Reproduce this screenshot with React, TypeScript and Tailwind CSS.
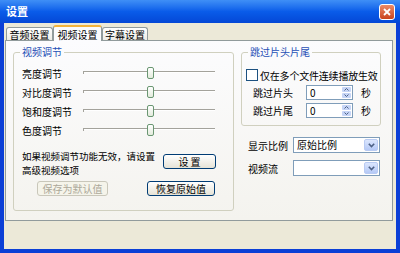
import React from "react";

const sliders = ["亮度调节", "对比度调节", "饱和度调节", "色度调节"];

function Slider() {
  return (
    <div className="relative h-[19px] w-[132px]">
      {/* track */}
      <div className="absolute left-0 right-0 top-[7px] h-[2px] border-t border-t-[#a3a29b] border-b border-b-white" />
      <div className="absolute left-0 top-[7px] h-[3px] w-px bg-[#a3a29b]" />
      {/* thumb */}
      <div className="absolute left-[64px] top-[3px] h-[12px] w-[7px] rounded-[2px] border border-[#6a9672] bg-gradient-to-b from-white to-[#e3ebdc]" />
    </div>
  );
}

function XpButton({ label, width, disabled }: { label: string; width: string; disabled?: boolean }) {
  return (
    <div
      className={
        disabled
          ? `${width} flex h-[15px] items-center justify-center rounded-[3px] border border-[#c9c7ba] bg-[#f5f4ea] text-[#aca899]`
          : `${width} flex h-[15px] items-center justify-center rounded-[3px] border border-[#003c74] bg-gradient-to-b from-white to-[#e6e3d6] text-black`
      }
    >
      {label}
    </div>
  );
}

function Spin() {
  return (
    <div className="flex h-[15px] w-[47px] items-stretch border border-[#7f9db9] bg-white">
      <span className="flex flex-1 items-center pl-[3px] leading-none">0</span>
      <div className="flex w-[11px] flex-col gap-px p-px">
        {[0, 1].map((i) => (
          <div key={i} className="flex flex-1 items-center justify-center rounded-[1px] bg-[#c6d5f7]">
            <svg width="5" height="3" viewBox="0 0 5 3">
              <path d={i === 0 ? "M0.5 2.5 L2.5 0.5 L4.5 2.5" : "M0.5 0.5 L2.5 2.5 L4.5 0.5"} fill="none" stroke="#4d6185" strokeWidth="1" />
            </svg>
          </div>
        ))}
      </div>
    </div>
  );
}

function Select({ value }: { value: string }) {
  return (
    <div className="flex h-[16px] w-[87px] border border-[#7f9db9] bg-white">
      <span className="flex flex-1 items-center pl-[3px] leading-none">{value}</span>
      <div className="m-px flex w-[14px] items-center justify-center rounded-[2px] border border-[#b9cbf3] bg-gradient-to-b from-[#dbe6fd] to-[#b5c9f6]">
        <svg width="7" height="5" viewBox="0 0 7 5">
          <path d="M0.8 0.8 L3.5 3.6 L6.2 0.8" fill="none" stroke="#4d6185" strokeWidth="1.6" />
        </svg>
      </div>
    </div>
  );
}

export default function App() {
  return (
    <div className="flex h-[253px] w-[400px] flex-col bg-[#0b3fd6] font-['Noto_Sans_CJK_SC','Noto_Sans',sans-serif] text-[10px] text-black">
      {/* Title bar */}
      <div className="flex h-[23px] items-center justify-between bg-gradient-to-b from-[#3f8ff6] via-[#0a5ce9] to-[#0547d6] pl-[6px] pr-[5px]">
        <span className="text-[11px] font-bold text-white">设置</span>
        <div className="flex h-[16px] w-[16px] items-center justify-center rounded-[3px] border border-white bg-gradient-to-b from-[#eb8a66] to-[#c9421a]">
          <svg width="8" height="8" viewBox="0 0 8 8">
            <path d="M1 1 L7 7 M7 1 L1 7" stroke="white" strokeWidth="1.8" />
          </svg>
        </div>
      </div>

      {/* Body */}
      <div className="mx-[4px] mb-[4px] flex flex-1 flex-col bg-[#ece9d8]">
        {/* Tabs */}
        <div className="mt-[2px] flex h-[15px] items-end pl-[2px]">
          <div className="flex h-[13px] w-[47px] items-center justify-center rounded-t-[3px] border-x border-t border-[#919b9c] bg-gradient-to-b from-white to-[#ecebe5]">
            音频设置
          </div>
          <div className="relative z-10 -mb-px flex h-[16px] w-[49px] items-center justify-center rounded-t-[3px] border-x border-t-2 border-x-[#919b9c] border-t-[#f5b43c] bg-[#fcfcfe]">
            视频设置
          </div>
          <div className="flex h-[13px] w-[46px] items-center justify-center rounded-t-[3px] border-x border-t border-[#919b9c] bg-gradient-to-b from-white to-[#ecebe5]">
            字幕设置
          </div>
        </div>

        {/* Tab panel */}
        <div className="ml-px flex h-[181px] w-[388px] items-start border border-[#919b9c] bg-gradient-to-b from-[#fcfcfe] to-[#f4f3ee] pl-[7px] pt-[5px]">
          {/* 视频调节 */}
          <fieldset className="h-[165px] w-[221px] rounded-[3px] border border-[#d0d0bf] pl-[8px]">
            <legend className="ml-[-2px] px-[2px] leading-[12px] text-[#1f4fb5]">视频调节</legend>
            <div className="mt-[6px] flex flex-col">
              {sliders.map((s) => (
                <div key={s} className="flex h-[19px] items-center">
                  <span className="w-[61px]">{s}</span>
                  <Slider />
                </div>
              ))}
            </div>
            <div className="mt-[9px] flex items-start">
              <div className="w-[141px] text-[9.5px] leading-[14px]">
                如果视频调节功能无效，请设置
                <br />
                高级视频选项
              </div>
              <div className="mt-[5px]">
                <XpButton label="设 置" width="w-[53px]" />
              </div>
            </div>
            <div className="mt-[4px] flex">
              <div className="ml-[15px]">
                <XpButton label="保存为默认值" width="w-[71px]" disabled />
              </div>
              <div className="ml-[39px]">
                <XpButton label="恢复原始值" width="w-[68px]" />
              </div>
            </div>
          </fieldset>

          {/* Right column */}
          <div className="ml-[7px] flex flex-col">
            <fieldset className="h-[80px] w-[140px] rounded-[3px] border border-[#d0d0bf] pl-[4px]">
              <legend className="ml-[2px] px-[2px] leading-[12px] text-[#1f4fb5]">跳过片头片尾</legend>
              <div className="mt-[10px] flex h-[14px] items-center whitespace-nowrap">
                <div className="h-[12px] w-[12px] shrink-0 border border-[#1c5180] bg-white" />
                <span className="ml-[2px] tracking-[-0.2px]">仅在多个文件连续播放生效</span>
              </div>
              <div className="mt-[3px] flex flex-col gap-[3px] pl-[7px]">
                {["跳过片头", "跳过片尾"].map((l) => (
                  <div key={l} className="flex h-[15px] items-center">
                    <span className="w-[53px]">{l}</span>
                    <Spin />
                    <span className="ml-[8px]">秒</span>
                  </div>
                ))}
              </div>
            </fieldset>
            <div className="mt-[11px] flex flex-col gap-[7px] pl-[7px]">
              <div className="flex items-center">
                <span className="w-[45px]">显示比例</span>
                <Select value="原始比例" />
              </div>
              <div className="flex items-center">
                <span className="w-[45px]">视频流</span>
                <Select value="" />
              </div>
            </div>
          </div>
        </div>
      </div>
    </div>
  );
}
